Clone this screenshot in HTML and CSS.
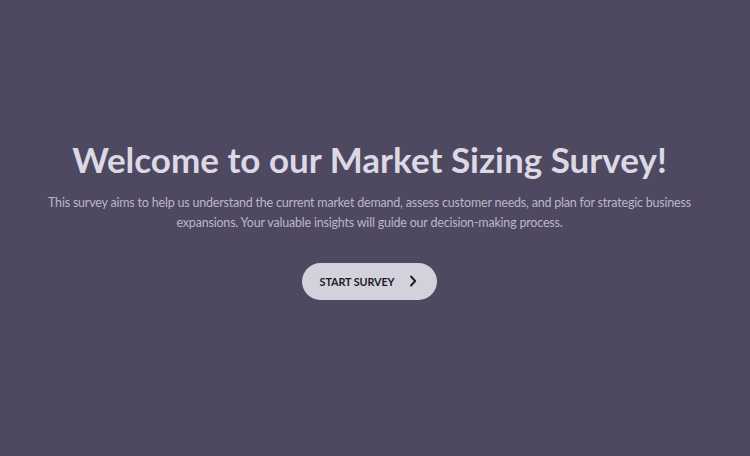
FILE: index.html
```html
<!DOCTYPE html>
<html lang="en">
<head>
<meta charset="utf-8">
<title>Market Sizing Survey</title>
<link rel="stylesheet" href="styles.css">
</head>
<body>
<main class="page">
  <section class="intro">
    <h1 class="title">Welcome to our Market Sizing Survey!</h1>
    <p class="lead">This survey aims to help us understand the current market demand, assess customer needs, and plan for strategic business expansions. Your valuable insights will guide our decision-making process.</p>
    <button class="start" type="button">
      <span class="start-label">START SURVEY</span>
      <svg class="chev" width="8" height="12" viewBox="0 0 8 12" aria-hidden="true"><path d="M2 1.5 L6.2 6 L2 10.5" fill="none" stroke="#1d1b24" stroke-width="1.9" stroke-linecap="round" stroke-linejoin="round"/></svg>
    </button>
  </section>
</main>
</body>
</html>
```
FILE: styles.css
```css
html, body {
  margin: 0;
  padding: 0;
  height: 100%;
}
body {
  background: #4f4861;
  font-family: "Lato", "Noto Sans", sans-serif;
}
.page {
  height: 100%;
  box-sizing: border-box;
  padding-right: 11px;
  display: flex;
  align-items: center;
  justify-content: center;
}
.intro {
  display: flex;
  flex-direction: column;
  align-items: center;
  text-align: center;
  width: 660px;
  margin-top: -20px;
}
.title {
  margin: 0;
  font-size: 35px;
  font-weight: 700;
  color: #dbd9e4;
  line-height: 44px;
}
.lead {
  margin: 12px 0 0;
  font-size: 12.5px;
  letter-spacing: -0.2px;
  line-height: 20px;
  color: #bab7c9;
}
.start {
  margin-top: 30px;
  display: flex;
  align-items: center;
  gap: 15px;
  height: 37px;
  padding: 0 20px 0 18px;
  border: none;
  border-radius: 19px;
  background: #d3d2dc;
  font-family: inherit;
  font-size: 10.8px;
  letter-spacing: -0.1px;
  font-weight: 700;
  color: #1d1b24;
  cursor: pointer;
}
.chev { display: block; }
```
